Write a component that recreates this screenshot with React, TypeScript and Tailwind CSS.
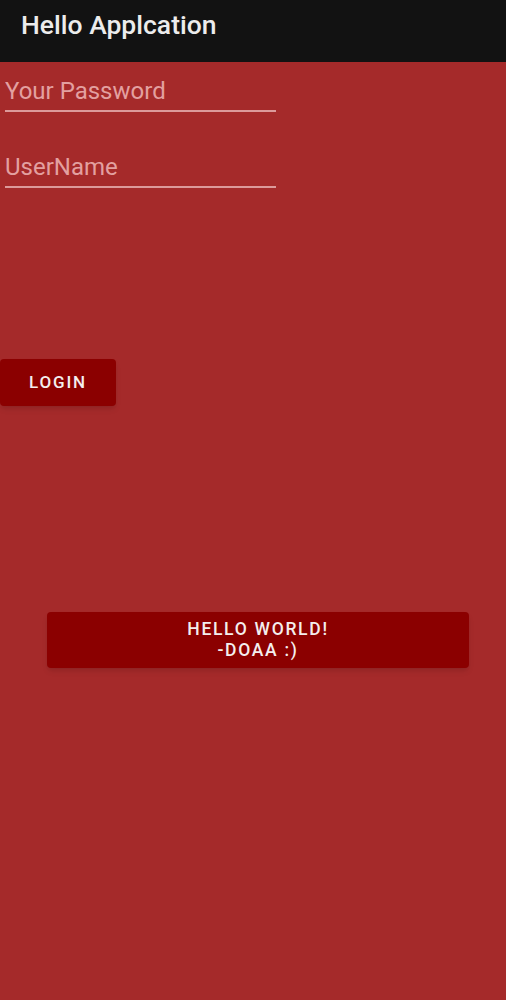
import React from "react";

export default function App() {
  return (
    <div className="min-h-[1000px] w-[506px] bg-[#a52a2a] font-['Roboto',sans-serif]">
      <div className="h-[62px] bg-[#121212] pl-[21px] pt-[9px]">
        <span className="text-[26.5px] leading-[32px] font-medium text-[#ececec]">Hello Applcation</span>
      </div>

      <div className="flex flex-col">
        <input
          placeholder="Your Password"
          className="mt-[8px] ml-[5px] w-[271px] h-[42px] pt-[2px] bg-transparent border-b-2 border-[#dc9a9a] text-[24px] text-white placeholder:text-[#e3a0a0] outline-none"
        />
        <input
          placeholder="UserName"
          className="mt-[34px] ml-[5px] w-[271px] h-[42px] pt-[2px] bg-transparent border-b-2 border-[#dc9a9a] text-[24px] text-white placeholder:text-[#e3a0a0] outline-none"
        />

        <button className="mt-[171px] w-[116px] h-[47px] rounded-[4px] bg-[#8b0000] shadow-md text-[17px] font-medium tracking-[1.8px] text-[#f4eeee]">
          LOGIN
        </button>

        <button className="mt-[206px] ml-[47px] w-[422px] h-[56px] rounded-[4px] bg-[#8b0000] shadow-md text-[17.5px] leading-[21px] font-medium tracking-[1.7px] text-[#f4eeee]">
          HELLO WORLD!
          <br />
          -DOAA :)
        </button>
      </div>
    </div>
  );
}
